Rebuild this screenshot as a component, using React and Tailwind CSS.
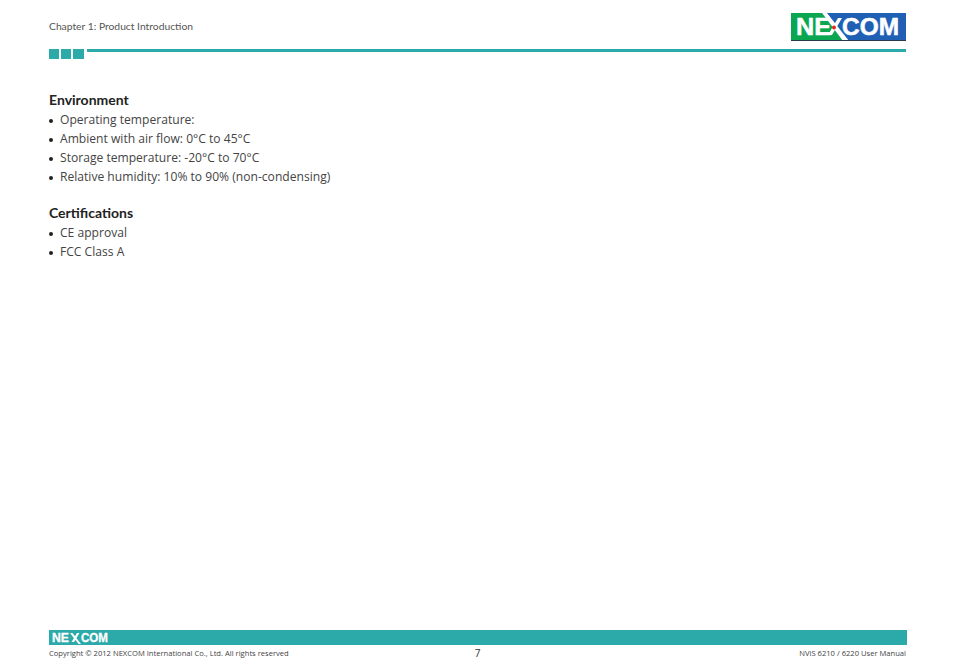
function NexcomLogo() {
  return (
    <svg width="115" height="28" viewBox="0 0 115 28" className="block">
      <rect x="0" y="0" width="115" height="28" fill="#1f5fb4" />
      <polygon points="0,0 31,0 52,28 0,28" fill="#0aa650" />
      <polygon points="31,0 36,0 58,28 52,28" fill="#ffffff" />
      <rect x="0" y="27" width="115" height="1" fill="#2b3a4a" />
      <text x="5" y="22" fontFamily="Liberation Sans" fontWeight="700" fontSize="23" fill="#ffffff" stroke="#ffffff" strokeWidth="0.5" textLength="35" lengthAdjust="spacingAndGlyphs">NE</text>
      <text x="51" y="22" fontFamily="Liberation Sans" fontWeight="700" fontSize="23" fill="#ffffff" stroke="#ffffff" strokeWidth="0.5" textLength="57" lengthAdjust="spacingAndGlyphs">COM</text>
      <polygon points="47,5 51,5 41,22 37,22" fill="#ffffff" />
      <circle cx="43" cy="14.5" r="1.9" fill="#e2231a" />
    </svg>
  );
}

function FooterLogo() {
  return (
    <svg width="64" height="15" viewBox="0 0 64 15" className="block">
      <text x="3" y="12" fontFamily="Liberation Sans" fontWeight="700" fontSize="12.5" fill="#ffffff" stroke="#ffffff" strokeWidth="0.3" textLength="17" lengthAdjust="spacingAndGlyphs">NE</text>
      <polygon points="21,3 23.5,3 32,14 29.5,14" fill="#ffffff" />
      <polygon points="28,3 30.5,3 25,12 22.5,12" fill="#ffffff" />
      <text x="32" y="12" fontFamily="Liberation Sans" fontWeight="700" fontSize="12.5" fill="#ffffff" stroke="#ffffff" strokeWidth="0.3" textLength="27" lengthAdjust="spacingAndGlyphs">COM</text>
    </svg>
  );
}

function Section({ title, items }) {
  return (
    <div className="mb-[16px]">
      <h2 className="mb-[2px] font-['Lato',sans-serif] text-[14px] font-bold leading-[19px] text-[#222]">{title}</h2>
      <ul>
        {items.map((item) => (
          <li key={item} className="flex h-[19px] items-center text-[12.1px] text-[#444]">
            <span className="mr-[7px] h-[4px] w-[4px] rounded-full bg-[#222]" />
            <span>{item}</span>
          </li>
        ))}
      </ul>
    </div>
  );
}

export default function App() {
  return (
    <div className="flex h-[672px] w-[954px] flex-col bg-white pl-[49px] pr-[48px] font-['Open_Sans',sans-serif]">
      <div className="flex h-[41px] items-end justify-between">
        <div className="mb-[9px] font-['Lato',sans-serif] text-[10.3px] leading-[12px] text-[#555]">Chapter 1: Product Introduction</div>
        <NexcomLogo />
      </div>
      <div className="mt-[8px] flex items-start">
        <div className="h-[10px] w-[10px] bg-[#2ca9a9]" />
        <div className="ml-[2px] h-[10px] w-[10px] bg-[#2ca9a9]" />
        <div className="ml-[2px] h-[10px] w-[11px] bg-[#2ca9a9]" />
        <div className="ml-[3px] h-[3px] flex-1 bg-[#2ca9a9]" />
      </div>

      <div className="mt-[31px] flex-1">
        <Section
          title="Environment"
          items={[
            "Operating temperature:",
            "Ambient with air flow: 0°C to 45°C",
            "Storage temperature: -20°C to 70°C",
            "Relative humidity: 10% to 90% (non-condensing)",
          ]}
        />
        <Section title="Certifications" items={["CE approval", "FCC Class A"]} />
      </div>

      <div className="mb-[12px] -mr-px">
        <div className="h-[15px] bg-[#2ca9a9]">
          <FooterLogo />
        </div>
        <div className="mr-px mt-[1px] flex items-start justify-between text-[7.6px] leading-[14px] text-[#444]">
          <span className="w-[300px]">Copyright © 2012 NEXCOM International Co., Ltd. All rights reserved</span>
          <span className="text-[10px] text-[#333]">7</span>
          <span className="w-[300px] text-right">NViS 6210 / 6220 User Manual</span>
        </div>
      </div>
    </div>
  );
}
